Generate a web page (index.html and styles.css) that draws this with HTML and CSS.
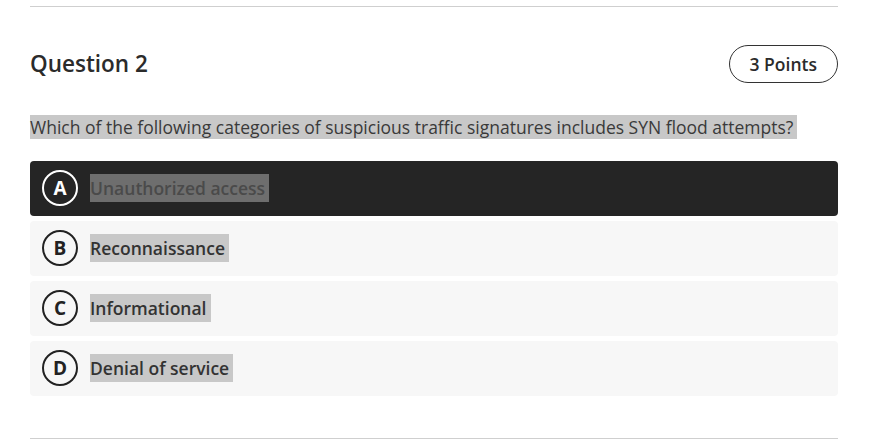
FILE: index.html
```html
<!DOCTYPE html>
<html lang="en">
<head>
<meta charset="UTF-8">
<meta name="viewport" content="width=device-width, initial-scale=1.0">
<title>Question 2</title>
<link rel="stylesheet" href="styles.css">
</head>
<body>

<div class="question">
    <div class="question-head">
        <h2>Question 2</h2>
        <span class="points">3 Points</span>
    </div>
    <p class="question-text"><span class="hl">Which of the following categories of suspicious traffic signatures includes SYN flood attempts?</span></p>
    <ul class="options">
        <li class="option selected">
            <span class="letter">A</span>
            <span class="hl">Unauthorized access</span>
        </li>
        <li class="option">
            <span class="letter">B</span>
            <span class="hl">Reconnaissance</span>
        </li>
        <li class="option">
            <span class="letter">C</span>
            <span class="hl">Informational</span>
        </li>
        <li class="option">
            <span class="letter">D</span>
            <span class="hl">Denial of service</span>
        </li>
    </ul>
</div>

</body>
</html>
```

FILE: styles.css
```css
body {
    margin: 0;
    font-family: "Open Sans", Arial, sans-serif;
    background-color: #fff;
    color: #333;
}

.question {
    margin: 6px 32px 0 30px;
    padding-top: 38px;
    padding-bottom: 42px;
    border-top: 1px solid #cfcfcf;
    border-bottom: 1px solid #cfcfcf;
}

.question-head {
    display: flex;
    justify-content: space-between;
    align-items: center;
}

.question-head h2 {
    margin: 0;
    font-size: 22.5px;
    font-weight: 600;
    color: #2b2b2b;
    line-height: 38px;
}

.points {
    display: inline-block;
    height: 36px;
    line-height: 36px;
    padding: 0 20px;
    border: 1px solid #333;
    border-radius: 20px;
    font-size: 17.5px;
    font-weight: 600;
    color: #2b2b2b;
}

.question-text {
    margin: 30px 0 20px 0;
    font-size: 17.5px;
    line-height: 28px;
    color: #3a3a3a;
}

.hl {
    background-color: #c8c8c8;
    padding-right: 4px;
}

.options {
    list-style: none;
    margin: 0;
    padding: 0;
    display: flex;
    flex-direction: column;
    gap: 5px;
}

.option {
    display: flex;
    align-items: center;
    height: 55px;
    box-sizing: border-box;
    padding: 0 0 1px 12px;
    background-color: #f7f7f7;
    border-radius: 4px;
    font-size: 17.5px;
    font-weight: 600;
    color: #333;
}

.option .hl {
    line-height: 28px;
}

.letter {
    display: flex;
    align-items: center;
    justify-content: center;
    width: 32px;
    height: 32px;
    margin-right: 12px;
    border: 2px solid #222;
    border-radius: 50%;
    font-size: 19px;
    font-weight: 700;
    color: #222;
}

.option.selected {
    background-color: #252525;
}

.option.selected .letter {
    border-color: #fff;
    color: #fff;
}

.option.selected .hl {
    background-color: #6e6e6e;
    color: #4a4a4a;
}
```
